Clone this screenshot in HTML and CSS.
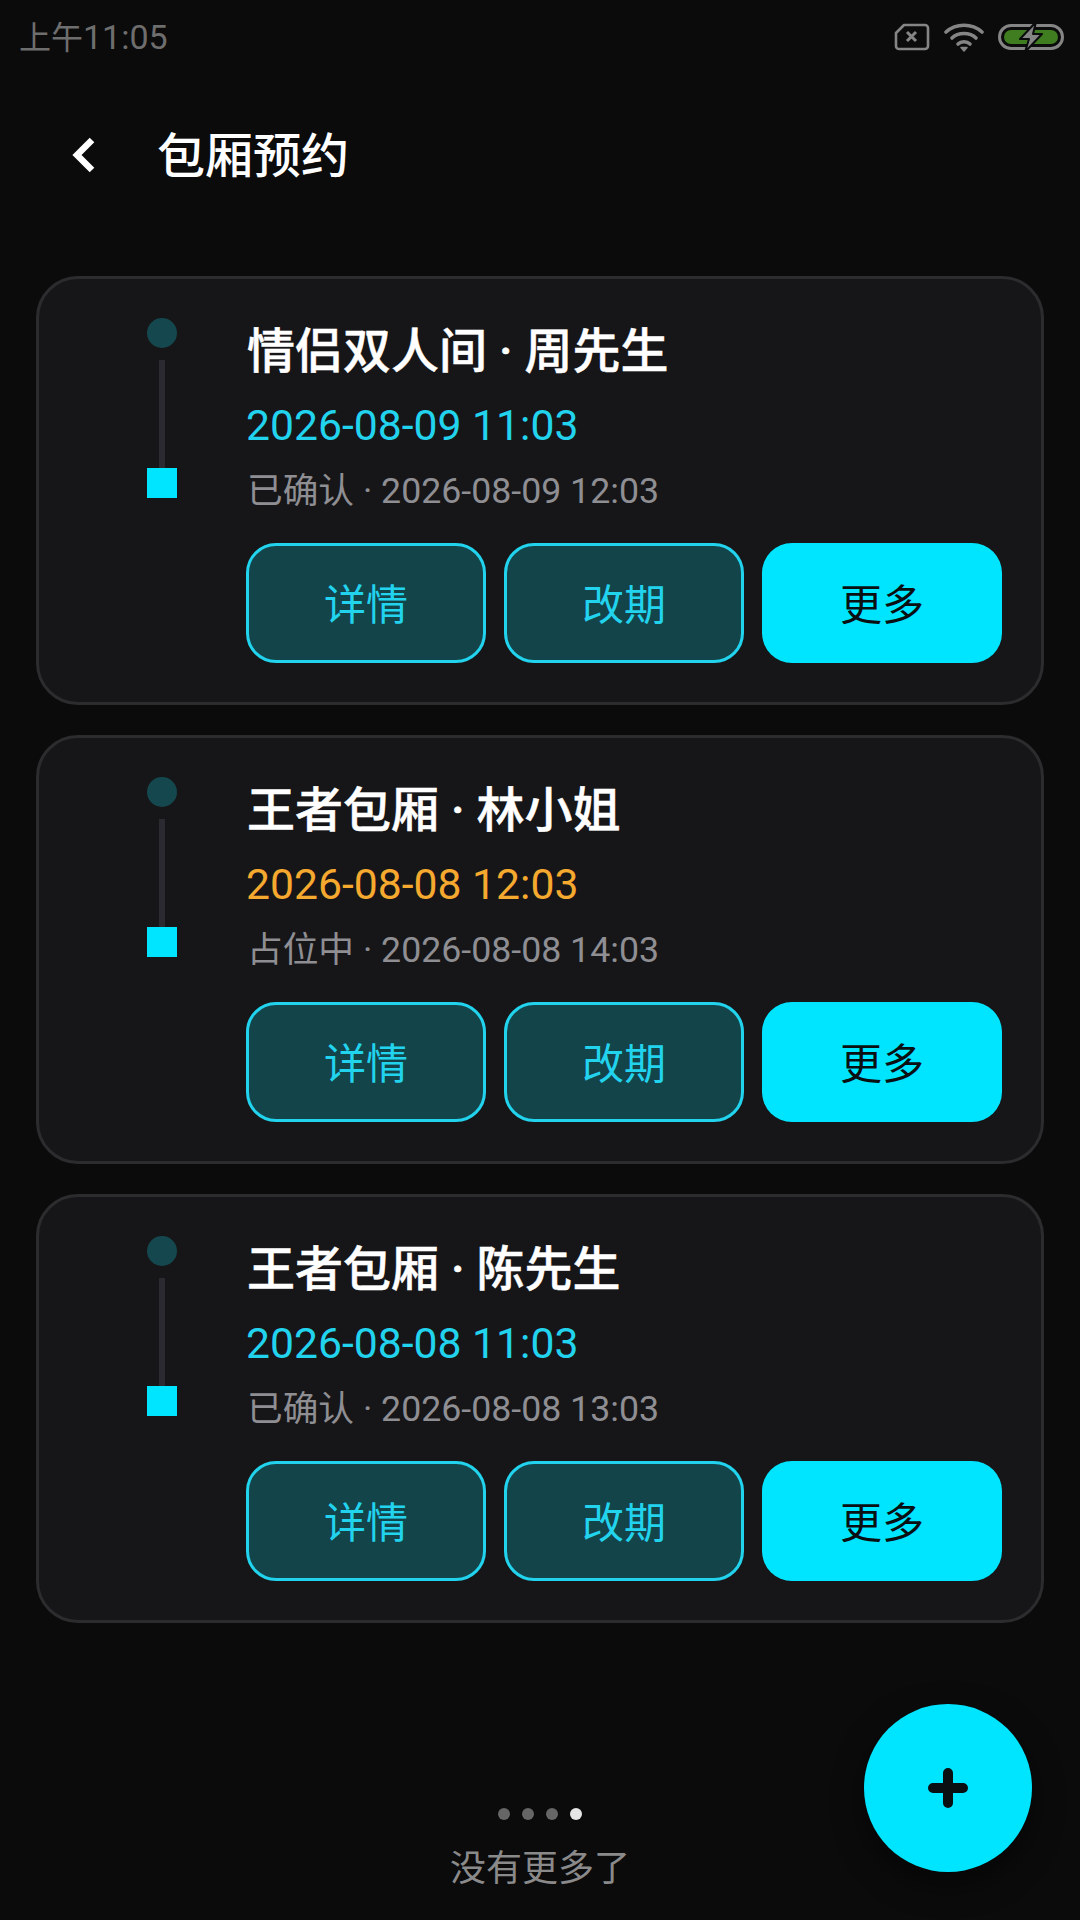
FILE: index.html
```html
<!DOCTYPE html>
<html lang="zh-CN">
<head>
    <meta charset="UTF-8">
    <meta name="viewport" content="width=device-width, initial-scale=1.0">
    <title>包厢预约</title>
    <link rel="stylesheet" href="styles.css">
</head>
<body>
    <div class="status-bar">
        <span class="status-time"><span class="status-period">上午</span>11:05</span>
        <div class="status-icons">
            <svg class="icon-sim" width="36" height="28" viewBox="0 0 36 28" fill="none" stroke="#858585" stroke-width="2.6" stroke-linejoin="round">
                <path d="M10 2H31a3 3 0 0 1 3 3V23a3 3 0 0 1-3 3H5a3 3 0 0 1-3-3V10Z"/>
                <path d="M13 9l9 9M22 9l-9 9" stroke-width="3"/>
            </svg>
            <svg class="icon-wifi" width="40" height="30" viewBox="0 0 40 30" fill="none" stroke="#858585" stroke-width="3.6" stroke-linecap="round">
                <path d="M2 10C12 1 28 1 38 10"/>
                <path d="M8 16C14 10 26 10 32 16"/>
                <path d="M14 22C17 19 23 19 26 22"/>
                <path d="M17 25.5L20 29L23 25.5Z" fill="#858585" stroke-width="1.5" stroke-linejoin="round"/>
            </svg>
            <svg class="icon-battery" width="66" height="32" viewBox="0 0 66 32" fill="none">
                <rect x="1.5" y="4.5" width="63" height="23" rx="11.5" stroke="#858585" stroke-width="3"/>
                <rect x="6" y="9" width="54" height="14" rx="7" fill="#3f7d20"/>
                <path d="M38 1L22 18H31L27 31L44 13H35Z" fill="#858585" stroke="#0b0b0d" stroke-width="2" stroke-linejoin="round"/>
            </svg>
        </div>
    </div>

    <header class="page-header">
        <svg class="back-icon" width="24" height="36" viewBox="0 0 24 36" fill="none" stroke="#fff" stroke-width="6.5">
            <path d="M21 3L6 18L21 33"/>
        </svg>
        <h1 class="page-title">包厢预约</h1>
    </header>

    <main class="booking-list">
        <section class="booking-card">
            <div class="timeline">
                <span class="timeline-start"></span>
                <span class="timeline-line"></span>
                <span class="timeline-end"></span>
            </div>
            <div class="booking-body">
                <h2 class="booking-title">情侣双人间 · 周先生</h2>
                <p class="booking-date">2026-08-09 11:03</p>
                <p class="booking-meta">已确认 · 2026-08-09 12:03</p>
                <div class="booking-actions">
                    <button class="btn">详情</button>
                    <button class="btn">改期</button>
                    <button class="btn btn-solid">更多</button>
                </div>
            </div>
        </section>

        <section class="booking-card">
            <div class="timeline">
                <span class="timeline-start"></span>
                <span class="timeline-line"></span>
                <span class="timeline-end"></span>
            </div>
            <div class="booking-body">
                <h2 class="booking-title">王者包厢 · 林小姐</h2>
                <p class="booking-date pending">2026-08-08 12:03</p>
                <p class="booking-meta">占位中 · 2026-08-08 14:03</p>
                <div class="booking-actions">
                    <button class="btn">详情</button>
                    <button class="btn">改期</button>
                    <button class="btn btn-solid">更多</button>
                </div>
            </div>
        </section>

        <section class="booking-card">
            <div class="timeline">
                <span class="timeline-start"></span>
                <span class="timeline-line"></span>
                <span class="timeline-end"></span>
            </div>
            <div class="booking-body">
                <h2 class="booking-title">王者包厢 · 陈先生</h2>
                <p class="booking-date">2026-08-08 11:03</p>
                <p class="booking-meta">已确认 · 2026-08-08 13:03</p>
                <div class="booking-actions">
                    <button class="btn">详情</button>
                    <button class="btn">改期</button>
                    <button class="btn btn-solid">更多</button>
                </div>
            </div>
        </section>
    </main>

    <footer class="list-footer">
        <div class="pager">
            <span class="pager-dot"></span>
            <span class="pager-dot"></span>
            <span class="pager-dot"></span>
            <span class="pager-dot active"></span>
        </div>
        <p class="no-more">没有更多了</p>
    </footer>

    <button class="fab" aria-label="新建">
        <svg width="40" height="40" viewBox="0 0 40 40" fill="none" stroke="#0a0f12" stroke-width="10" stroke-linecap="round">
            <path d="M20 5V35M5 20H35"/>
        </svg>
    </button>
</body>
</html>
```

FILE: styles.css
```css
* {
    box-sizing: border-box;
}

body {
    position: relative;
    display: flex;
    flex-direction: column;
    width: 1080px;
    height: 1920px;
    margin: 0;
    overflow: hidden;
    background: #0b0b0c;
    color: #fff;
    font-family: Roboto, "Noto Sans CJK SC", sans-serif;
}

h1, h2, p {
    margin: 0;
}

/* Status bar */
.status-bar {
    display: flex;
    justify-content: space-between;
    align-items: center;
    height: 74px;
    padding: 0 16px 4px 19px;
}

.status-time {
    font-size: 34px;
    color: #6e6e6e;
}

.status-period {
    font-size: 32px;
}

.status-icons {
    display: flex;
    align-items: center;
    gap: 14px;
    margin-top: 4px;
}

/* Header */
.page-header {
    display: flex;
    align-items: center;
    gap: 62px;
    height: 120px;
    margin-top: 18px;
    padding-left: 71px;
}

.back-icon {
    margin-top: 6px;
}

.page-title {
    font-size: 48px;
    font-weight: 500;
}

/* Cards */
.booking-list {
    display: flex;
    flex-direction: column;
    gap: 30px;
    margin-top: 64px;
    padding: 0 36px;
}

.booking-card {
    display: flex;
    height: 429px;
    padding: 39px;
    background: #161618;
    border: 3px solid #2c2c2f;
    border-radius: 42px;
}

.timeline {
    display: flex;
    flex-direction: column;
    align-items: center;
    flex: 0 0 168px;
}

.timeline-start {
    width: 30px;
    height: 30px;
    border-radius: 50%;
    background: #14484e;
}

.timeline-line {
    width: 6px;
    height: 108px;
    margin-top: 12px;
    background: #2a2a30;
}

.timeline-end {
    width: 30px;
    height: 30px;
    background: #00e5ff;
}

.booking-body {
    flex: 1;
    padding-top: 2px;
}

.booking-title {
    padding-left: 1px;
    font-size: 48px;
    font-weight: 500;
    line-height: 64px;
    -webkit-text-stroke: 0.5px #fff;
}

.booking-date {
    margin-top: 13px;
    font-size: 42.7px;
    line-height: 56px;
    color: #22d3ee;
}

.booking-date.pending {
    color: #f5a92e;
}

.booking-meta {
    margin-top: 13px;
    padding-left: 1px;
    font-size: 35.7px;
    line-height: 50px;
    color: #8e8e93;
}

.booking-actions {
    display: flex;
    gap: 18px;
    margin-top: 27px;
}

.btn {
    width: 240px;
    height: 120px;
    padding: 0 0 4px;
    font-family: inherit;
    font-size: 42px;
    color: #22d3ee;
    background: #13444a;
    border: 3px solid #22d3ee;
    border-radius: 30px;
}

.btn-solid {
    color: #0a0f12;
    background: #00e5ff;
    border: none;
}

/* Footer */
.list-footer {
    display: flex;
    flex-direction: column;
    align-items: center;
    margin-top: auto;
    padding-bottom: 26px;
}

.pager {
    display: flex;
    gap: 12px;
}

.pager-dot {
    width: 12px;
    height: 12px;
    border-radius: 50%;
    background: #666;
}

.pager-dot.active {
    background: #e6e6e6;
}

.no-more {
    margin-top: 24px;
    font-size: 36px;
    line-height: 50px;
    color: #8a8a8a;
}

/* Floating add button */
.fab {
    position: absolute;
    top: 1704px;
    left: 864px;
    display: flex;
    align-items: center;
    justify-content: center;
    width: 168px;
    height: 168px;
    padding: 0;
    background: #00e5ff;
    border: none;
    border-radius: 50%;
    box-shadow: 0 12px 30px rgba(0, 0, 0, 0.5);
}
```
